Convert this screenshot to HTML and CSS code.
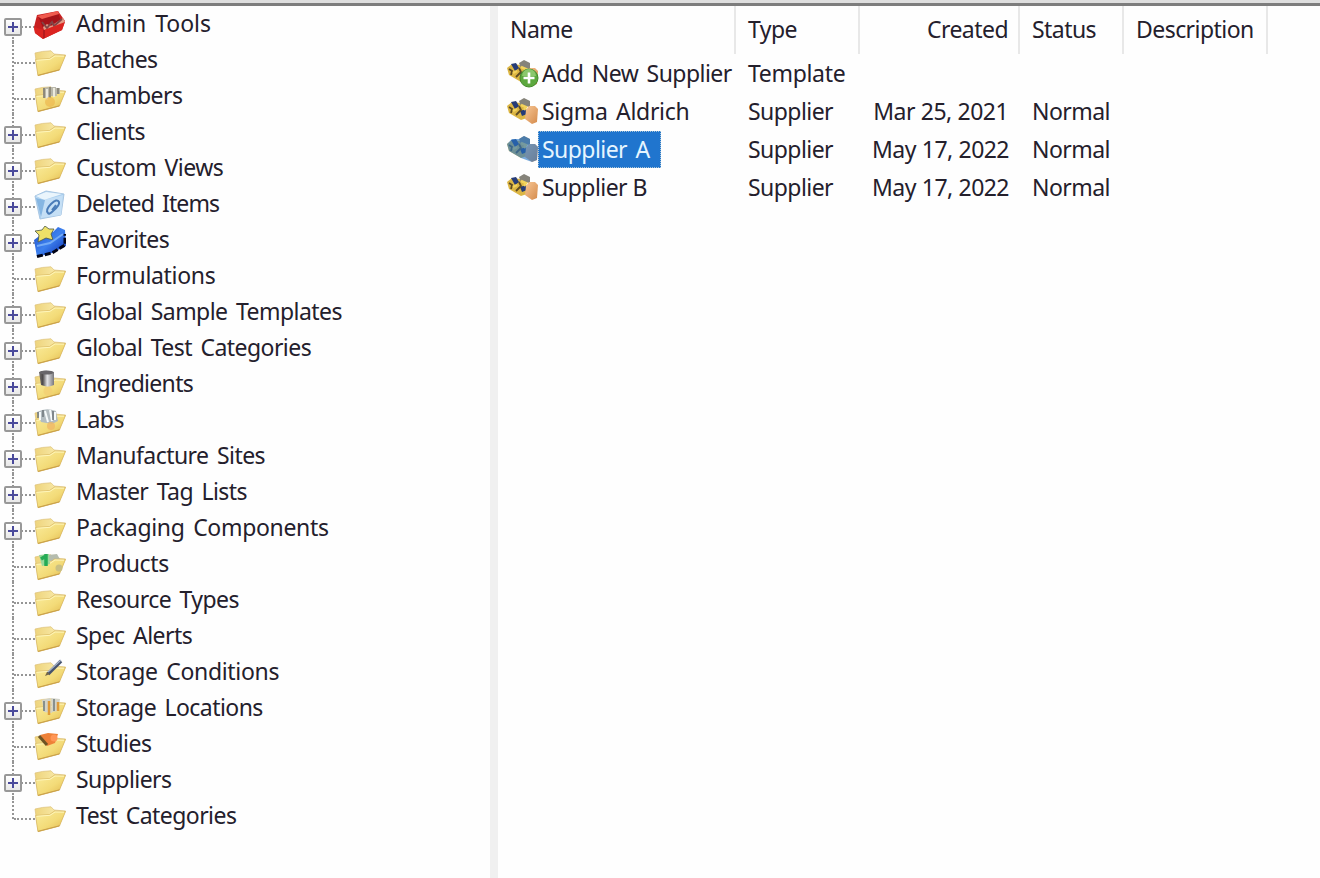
FILE: index.html
```html
<!DOCTYPE html>
<html lang="en">
<head>
<meta charset="utf-8">
<title>Suppliers</title>
<link rel="stylesheet" href="styles.css">
</head>
<body>
<svg class="defs" aria-hidden="true">
  <defs>
    <linearGradient id="gold" x1="0" y1="0" x2="1" y2="1"><stop offset="0" stop-color="#faec9c"/><stop offset=".55" stop-color="#f3db78"/><stop offset="1" stop-color="#e0b64a"/></linearGradient>
    <linearGradient id="goldback" x1="0" y1="0" x2="1" y2="0"><stop offset="0" stop-color="#eed47c"/><stop offset="1" stop-color="#fcf1b8"/></linearGradient>
    <linearGradient id="steel" x1="0" y1="0" x2="1" y2="0"><stop offset="0" stop-color="#77736f"/><stop offset=".25" stop-color="#4d4a4b"/><stop offset=".55" stop-color="#e5e5e8"/><stop offset="1" stop-color="#77777b"/></linearGradient>
    <linearGradient id="blue" x1="0" y1="0" x2="1" y2="1"><stop offset="0" stop-color="#1f4cc8"/><stop offset=".5" stop-color="#3c80ee"/><stop offset="1" stop-color="#0a2bb0"/></linearGradient>
    <linearGradient id="peach" x1="0" y1="0" x2="1" y2="1"><stop offset="0" stop-color="#f8c795"/><stop offset="1" stop-color="#d48a4b"/></linearGradient>
    <symbol id="back" viewBox="0 0 32 32"><path d="M1 7Q8 5 17 4.800L20 8 31.500 9 25 24 4 29.500Z" fill="url(#goldback)" stroke="#dcc078" stroke-width=".7"/></symbol>
    <symbol id="front" viewBox="0 0 32 32"><path d="M1.500 13.500 15.500 12.500 20.500 9 31.500 9.400 25.500 24 4 29.700Z" fill="url(#gold)" stroke="#d4b05a" stroke-width=".6"/><path d="M2.500 14.300 16 13.300 21 10 30 10.200" fill="none" stroke="#fff6bc"/><path d="M4 29.300 25.500 23.800" stroke="#c99f48" stroke-width="1"/></symbol>
    <symbol id="folder" viewBox="0 0 32 32"><use href="#back"/><use href="#front"/></symbol>
    <symbol id="cans" viewBox="0 0 32 32"><use href="#folder"/><path d="M9 6 15 5 16 15 10 16ZM16 5h6l1 9h-6zM22 6h4v6h-4z" fill="#b9b7aa"/><path d="M10 6v10M16 5v11M24 6v6" stroke="#807c70" stroke-width="1.600"/><path d="M13 7v11M20 6v9" stroke="#eceadd" stroke-width="2"/><circle cx="16" cy="20" r="5" fill="#ecb850" opacity=".7"/></symbol>
    <symbol id="labs" viewBox="0 0 32 32"><use href="#folder"/><path d="M3 6Q12 1 22 5L24 15 18 18 7 16Z" fill="#b3bcc0"/><path d="M6 6v8M11 5l3 11M16 4l2 11M21 6v8" stroke="#f6fafb" stroke-width="2"/><path d="M9 4v7M19 5v9M4 6v6" stroke="#697176" stroke-width="1.400"/><circle cx="17" cy="20" r="4" fill="#f0b867" opacity=".8"/></symbol>
    <symbol id="ingredient" viewBox="0 0 32 32"><use href="#folder"/><path d="M5 2Q12-1 20 2L20 15 14 17 7 15Z" fill="url(#steel)"/><ellipse cx="12.500" cy="2.500" rx="7" ry="2" fill="#68666a"/><circle cx="14" cy="21" r="4.500" fill="#f3cf74" opacity=".8"/></symbol>
    <symbol id="product" viewBox="0 0 32 32"><use href="#back"/><path d="M14 5 23 4 27 11H15z" fill="#b5bcae"/><use href="#front"/><path d="M5 5 15 4 16 14 8 16Z" fill="#9bd89a"/><path d="M12 4v12M7 9l5-3" stroke="#25ab55" stroke-width="3.500"/><circle cx="25" cy="18" r="3.500" fill="#c9bf83"/></symbol>
    <symbol id="pen" viewBox="0 0 32 32"><use href="#folder"/><path d="M14 16 27 3" stroke="#46536d" stroke-width="3.600"/><path d="M14 14 27 2" stroke="#a7b4ca" stroke-width="1.200"/><path d="M11 18 13 14 16 16Z" fill="#726547"/></symbol>
    <symbol id="locations" viewBox="0 0 32 32"><use href="#folder"/><path d="M8 6 16 4 18 19 10 18ZM17 4 26 5 24 17 18 18Z" fill="#d3d3c8"/><path d="M10 7v10M20 5v12" stroke="#88908d" stroke-width="2"/><path d="M15 7v14M24 8v9" stroke="#df9a38" stroke-width="2.500"/></symbol>
    <symbol id="study" viewBox="0 0 32 32"><use href="#folder"/><path d="M6 5 14 3 24 4 21 13 13 16Z" fill="#ee8138"/><path d="M5 6 13 15" stroke="#6d5424" stroke-width="3"/><circle cx="20" cy="8" r="3.500" fill="#ff9656"/></symbol>
    <symbol id="tools" viewBox="0 0 32 32"><path d="M0 17 3 5 24 1 31 11 28 20 9 29 1 23Z" fill="#c71f20"/><path d="M4 6 24 2 27 12 9 18Z" fill="#a51319"/><path d="M3 6 24 1 25 4 8 9Z" fill="#f05a4e"/><path d="M9 17 13 14 17 16 29 8 31 12 23 18 10 20Z" fill="#e39a85"/><path d="M8 12 13 18 18 12 20 16 28 9" fill="none" stroke="#814547" stroke-width="1.800"/><path d="M0 17 10 20 31 12 28 20 9 29 1 23Z" fill="#db2420"/><path d="M10 20v8" stroke="#8d1018"/></symbol>
    <symbol id="deleted" viewBox="0 0 32 32"><path d="M1 6 12 1 30 4 27 25 6 29Z" fill="#a8ceef" stroke="#a9c7e3"/><path d="M2 7 10 10 29 5 27 25 7 28Z" fill="#c5dff5"/><path d="M2 6 12 2 28 4 10 10Z" fill="#eaf5fc"/><path d="M2 8 7 27 11 10Z" fill="#86b6e2"/><path d="M14 23Q11 20 17 14Q23 8 25 12Q26 15 19 21Q15 25 14 23ZM18 20 22 15" fill="none" stroke="#4a7cb8" stroke-width="2"/></symbol>
    <symbol id="favorite" viewBox="0 0 32 32"><path d="M0 14 8 8 19 6 24 1 31 4 32 20 18 27 3 31Z" fill="url(#blue)"/><path d="M3 30.500 18 27 31 19V8" fill="none" stroke="#020417" stroke-width="3" stroke-dasharray="6 2"/><path d="M11 0 15 3 20 3 17 8 19 14 12 12 4 16 5 9 1 5 8 4Z" fill="#eee168" stroke="#4b5842" stroke-width=".8"/><path d="M3 20 16 17 29 8" fill="none" stroke="#73aaf6" stroke-width="2"/></symbol>
    <symbol id="supplier" viewBox="0 0 32 28"><path d="M0 8 5 4 14 5 20 12 20 20 14 22 2 15Z" fill="#dcb644"/><path d="M12 3 17 0 23 3 23 9 14 8Z" fill="#85837a"/><path d="M4 4 9 3 12 8 8 11ZM13 13l6-2 1 5-5 2Z" fill="#263c78"/><path d="M2 9 5 11 4 15M12 8 14 12 9 17" fill="none" stroke="#5d4b24" stroke-width="1.800"/><path d="M14 7 19 9 17 12M6 13l4-2" fill="none" stroke="#f3d35b" stroke-width="2.500"/><path d="M19 12 22 8 28 8 31 11 30 24 25 26 18 21Z" fill="url(#peach)"/></symbol>
    <symbol id="supplier-selected" viewBox="0 0 32 28"><use href="#supplier"/><path d="M0 8 5 3 12 3 17 0 23 3 23 8 28 8 31 11 30 24 25 26 14 22 2 15Z" fill="#2878c8" opacity=".62"/></symbol>
    <symbol id="addsupplier" viewBox="0 0 32 28"><use href="#supplier"/><circle cx="22" cy="18" r="9" fill="#5ca83e" stroke="#438b2d"/><path d="M15 16a7 7 0 0 1 14 0" fill="#8bc76d"/><path d="M22 12.500v11M16.500 18h11" stroke="#fff" stroke-width="2.600"/></symbol>
  </defs>
</svg>
<main class="window">
  <ul class="tree">
    <li class="node branch"><i class="toggle"></i><svg class="icon"><use href="#tools"/></svg><span class="wide">Admin Tools</span></li>
    <li class="node"><i class="toggle"></i><svg class="icon"><use href="#folder"/></svg><span>Batches</span></li>
    <li class="node"><i class="toggle"></i><svg class="icon"><use href="#cans"/></svg><span>Chambers</span></li>
    <li class="node branch"><i class="toggle"></i><svg class="icon"><use href="#folder"/></svg><span>Clients</span></li>
    <li class="node branch"><i class="toggle"></i><svg class="icon"><use href="#folder"/></svg><span>Custom Views</span></li>
    <li class="node branch"><i class="toggle"></i><svg class="icon"><use href="#deleted"/></svg><span class="tight">Deleted Items</span></li>
    <li class="node branch"><i class="toggle"></i><svg class="icon"><use href="#favorite"/></svg><span>Favorites</span></li>
    <li class="node"><i class="toggle"></i><svg class="icon"><use href="#folder"/></svg><span class="roomy">Formulations</span></li>
    <li class="node branch"><i class="toggle"></i><svg class="icon"><use href="#folder"/></svg><span>Global Sample Templates</span></li>
    <li class="node branch"><i class="toggle"></i><svg class="icon"><use href="#folder"/></svg><span>Global Test Categories</span></li>
    <li class="node branch"><i class="toggle"></i><svg class="icon"><use href="#ingredient"/></svg><span class="snug">Ingredients</span></li>
    <li class="node branch"><i class="toggle"></i><svg class="icon"><use href="#labs"/></svg><span>Labs</span></li>
    <li class="node branch"><i class="toggle"></i><svg class="icon"><use href="#folder"/></svg><span>Manufacture Sites</span></li>
    <li class="node branch"><i class="toggle"></i><svg class="icon"><use href="#folder"/></svg><span>Master Tag Lists</span></li>
    <li class="node branch"><i class="toggle"></i><svg class="icon"><use href="#folder"/></svg><span class="roomy">Packaging Components</span></li>
    <li class="node"><i class="toggle"></i><svg class="icon"><use href="#product"/></svg><span class="roomy">Products</span></li>
    <li class="node"><i class="toggle"></i><svg class="icon"><use href="#folder"/></svg><span>Resource Types</span></li>
    <li class="node"><i class="toggle"></i><svg class="icon"><use href="#folder"/></svg><span>Spec Alerts</span></li>
    <li class="node"><i class="toggle"></i><svg class="icon"><use href="#pen"/></svg><span class="roomy">Storage Conditions</span></li>
    <li class="node branch"><i class="toggle"></i><svg class="icon"><use href="#locations"/></svg><span>Storage Locations</span></li>
    <li class="node"><i class="toggle"></i><svg class="icon"><use href="#study"/></svg><span>Studies</span></li>
    <li class="node branch"><i class="toggle"></i><svg class="icon"><use href="#folder"/></svg><span>Suppliers</span></li>
    <li class="node"><i class="toggle"></i><svg class="icon"><use href="#folder"/></svg><span>Test Categories</span></li>
  </ul>
  <section class="list">
    <div class="row head"><div>Name</div><div>Type</div><div class="date">Created</div><div>Status</div><div>Description</div></div>
    <div class="row"><div class="name"><svg class="mark"><use href="#addsupplier"/></svg><span class="label">Add New Supplier</span></div><div class="roomy">Template</div><div></div><div></div><div></div></div>
    <div class="row"><div class="name"><svg class="mark"><use href="#supplier"/></svg><span class="label roomy">Sigma Aldrich</span></div><div>Supplier</div><div class="date">Mar 25, 2021</div><div>Normal</div><div></div></div>
    <div class="row selected"><div class="name"><svg class="mark"><use href="#supplier-selected"/></svg><span class="label">Supplier A</span></div><div>Supplier</div><div class="date">May 17, 2022</div><div>Normal</div><div></div></div>
    <div class="row"><div class="name"><svg class="mark"><use href="#supplier"/></svg><span class="label plain">Supplier B</span></div><div>Supplier</div><div class="date">May 17, 2022</div><div>Normal</div><div></div></div>
  </section>
</main>
</body>
</html>
```
FILE: styles.css
```css
* { box-sizing: border-box; }
body { margin: 0; background: #fefefe; color: #24202c; font: 23px/34px "Noto Sans", "Open Sans", sans-serif; letter-spacing: -.55px; word-spacing: 3px; }
.defs { position: absolute; width: 0; height: 0; }
.window { display: flex; height: 878px; border-top: 3px solid #dedede; overflow: hidden; }
.window::before { content: ""; position: absolute; top: 3px; left: 0; width: 100%; height: 3px; background: #7d7d7d; }
.tree { width: 498px; margin: 0; padding: 3px 0 0; border-right: 8px solid #f0f0f0; list-style: none; }
.node { position: relative; display: flex; height: 36px; padding-left: 4px; white-space: nowrap; }
.node::before { content: ""; position: absolute; left: 12px; top: 0; height: 36px; border-left: 2px dotted #959595; }
.node:first-child::before { top: 20px; height: 16px; }
.node:last-child::before { height: 21px; }
.node::after { content: ""; position: absolute; left: 14px; top: 20px; width: 21px; border-top: 2px dotted #959595; }
.toggle { width: 18px; height: 18px; margin: 12px 12px 0 0; }
.branch .toggle { position: relative; z-index: 1; border: 2px solid #989898; border-radius: 2px; background: linear-gradient(#4a4a9b, #4a4a9b) center / 10px 2px no-repeat, linear-gradient(#4a4a9b, #4a4a9b) center / 2px 10px no-repeat, linear-gradient(#fff, #e8e8e8); }
.icon { position: relative; z-index: 1; width: 32px; height: 32px; margin: 4px 10px 0 0; flex: none; }
.wide { letter-spacing: -.05px; }
.roomy { letter-spacing: -.33px; }
.snug { letter-spacing: -.7px; }
.tight { letter-spacing: -.88px; }
.list { flex: 1; padding-top: 3px; }
.row { display: grid; grid-template-columns: 238px 124px 160px 104px 144px; height: 38px; line-height: 36px; white-space: nowrap; }
.row > div { padding: 0 12px 0 12px; }
.head { height: 49px; line-height: 46px; }
.head > div { height: 48px; border-right: 2px solid #e8e8e8; }
.head > .date { padding-right: 10px; }
.row > .date { text-align: right; word-spacing: .5px; }
.row > .name { display: flex; padding: 0 0 0 9px; }
.mark { width: 32px; height: 28px; margin: 5px 0 0; flex: none; }
.label { padding: 0 2px 0 3px; }
.plain { word-spacing: 0; }
.selected .label { height: 37px; margin-left: -1px; padding: 0 11px 0 4px; background: #2075ce; outline: 1px dotted #a9c4d6; outline-offset: -1px; color: #e6f5ff; }
```
